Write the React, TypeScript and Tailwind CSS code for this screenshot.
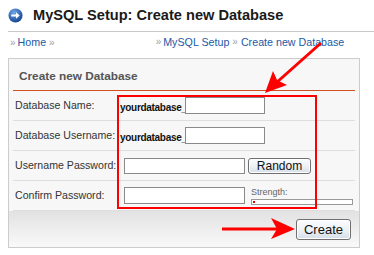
import React from 'react';

const font = { fontFamily: '"Liberation Sans", Arial, sans-serif' };

function GoIcon() {
  return (
    <svg width="15" height="15" viewBox="0 0 16 16">
      <defs>
        <radialGradient id="goG" cx="40%" cy="30%" r="75%">
          <stop offset="0%" stopColor="#6fa8e8" />
          <stop offset="100%" stopColor="#0d3f8f" />
        </radialGradient>
      </defs>
      <circle cx="8" cy="8" r="7.5" fill="url(#goG)" />
      <path d="M3.5 7h5V4.5L12.5 8 8.5 11.5V9h-5z" fill="#fff" />
    </svg>
  );
}

function Btn({ label, className }: { label: string; className: string }) {
  return (
    <button
      className={`border border-[#707070] rounded-[3px] bg-gradient-to-b from-[#fbfcfd] via-[#eef2f6] to-[#d5dfe8] text-[#111] text-[12px] leading-none shadow-[inset_0_0_0_1px_#fff] ${className}`}
    >
      {label}
    </button>
  );
}

function Row({ label, children }: { label: string; children: React.ReactNode }) {
  return (
    <div className="flex items-center h-[30px] border-b border-[#dedede]">
      <div className="w-[107px] pl-[2px] text-[10.6px] text-[#333] whitespace-nowrap">{label}</div>
      {children}
    </div>
  );
}

function Prefixed() {
  return (
    <>
      <span className="text-[10px] font-bold text-[#111] tracking-[-0.3px] w-[64px] pt-[4px] mr-[1px] whitespace-nowrap">
        yourdatabase_
      </span>
      <input className="w-[80px] h-[17px] border border-[#8a8a8a] bg-white" />
    </>
  );
}

export default function App() {
  return (
    <div className="relative w-[374px] h-[255px] bg-white overflow-hidden" style={font}>
      {/* title */}
      <div className="ml-[8px] h-[32px] flex items-center gap-[10px] border-b border-[#c8c8c8] pb-[1px]">
        <GoIcon />
        <h1 className="text-[14.6px] font-bold text-[#1a1a1a] leading-none whitespace-nowrap">MySQL Setup: Create new Database</h1>
      </div>

      {/* breadcrumb */}
      <div className="flex items-center h-[20px] pl-[10px] text-[10.7px] text-[#1b5aa6] whitespace-nowrap">
        <span className="text-[#a0a0a0] text-[10px] mr-[2px]">»</span>
        <span>Home</span>
        <span className="text-[#a0a0a0] text-[10px] ml-[3px]">»</span>
        <div className="ml-[101px] flex items-center">
          <span className="text-[#a0a0a0] text-[10px] mr-[2px]">»</span>
          <span>MySQL Setup</span>
          <span className="text-[#a0a0a0] text-[10px] mx-[3px]">»</span>
          <span>Create new Database</span>
        </div>
      </div>

      {/* panel */}
      <div className="ml-[8px] mt-[6px] w-[352px] h-[190px] border border-[#cccccc] bg-[#f7f7f7] px-[4px] flex flex-col">
        <div className="h-[32px] shrink-0 flex items-center pl-[6px] pt-[4px] border-b border-[#d0501e] text-[11.8px] font-bold text-[#555]">
          Create new Database
        </div>

        <Row label="Database Name:">
          <Prefixed />
        </Row>
        <Row label="Database Username:">
          <Prefixed />
        </Row>
        <Row label="Username Password:">
          <input className="ml-[4px] w-[121px] h-[16px] border border-[#8a8a8a] bg-white" />
          <Btn label="Random" className="ml-[3px] w-[63px] h-[16px]" />
        </Row>
        <Row label="Confirm Password:">
          <input className="ml-[4px] w-[121px] h-[17px] border border-[#8a8a8a] bg-white" />
          <div className="ml-[6px] flex flex-col pt-[1px]">
            <span className="text-[9px] leading-[9px] text-[#666]">Strength:</span>
            <div className="mt-[2px] w-[102px] h-[6px] border border-[#9a9a9a] bg-white p-[1px]">
              <div className="w-[2px] h-full bg-[#e00000]" />
            </div>
          </div>
        </Row>

        <div className="flex-1 -mx-[4px] bg-gradient-to-b from-[#e2e2e2] to-[#f9f9f9] flex items-center justify-end pr-[8px]">
          <Btn label="Create" className="w-[55px] h-[21px] text-[13px]" />
        </div>
      </div>

      {/* annotations */}
      <div className="absolute left-[117px] top-[95px] w-[200px] h-[114px] border-2 border-[#ff0000] pointer-events-none" />
      <svg className="absolute inset-0 pointer-events-none" width="374" height="255">
        <line x1="321" y1="43" x2="276" y2="83" stroke="#ff0000" strokeWidth="3" />
        <path d="M265 93 L273 71 L277 80 L287 85 Z" fill="#ff0000" />
        <line x1="222" y1="229" x2="278" y2="229" stroke="#ff0000" strokeWidth="3" />
        <path d="M295 229 L271 218 L277 229 L271 239 Z" fill="#ff0000" />
      </svg>
    </div>
  );
}
